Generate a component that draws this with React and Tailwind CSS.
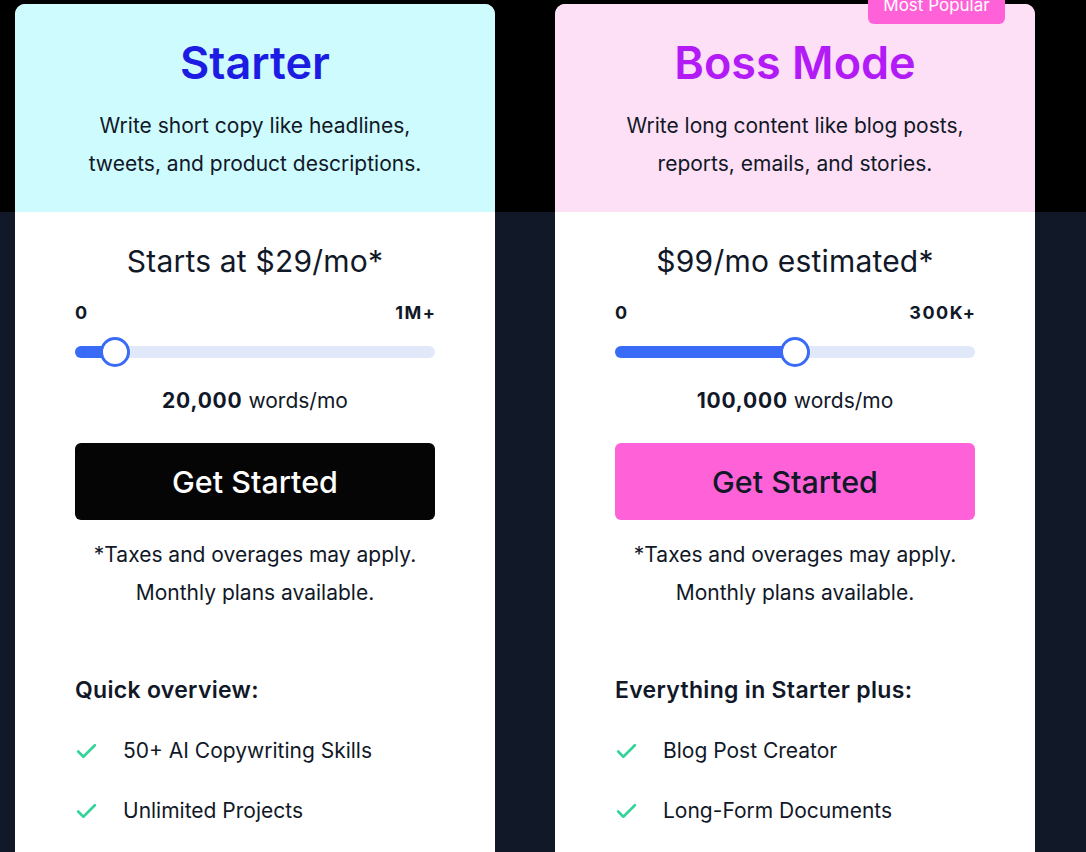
import { Check } from 'lucide-react'

const plans = [
  {
    name: 'Starter',
    headerBg: 'bg-[#cdfbfe]',
    titleColor: 'text-[#1c1ce3]',
    desc: ['Write short copy like headlines,', 'tweets, and product descriptions.'],
    price: 'Starts at $29/mo*',
    max: '1M+',
    fill: 11.1,
    words: '20,000',
    button: 'bg-[#050505] text-white',
    listTitle: 'Quick overview:',
    items: ['50+ AI Copywriting Skills', 'Unlimited Projects'],
  },
  {
    name: 'Boss Mode',
    headerBg: 'bg-[#fde0f6]',
    titleColor: 'text-[#b31bf6]',
    desc: ['Write long content like blog posts,', 'reports, emails, and stories.'],
    price: '$99/mo estimated*',
    max: '300K+',
    fill: 50,
    words: '100,000',
    button: 'bg-[#ff62d8] text-[#111827]',
    listTitle: 'Everything in Starter plus:',
    items: ['Blog Post Creator', 'Long-Form Documents'],
    badge: 'Most Popular',
  },
]

function Slider({ fill }) {
  return (
    <div className="relative mt-[12px] h-[30px] flex items-center">
      <div className="w-full h-3 rounded-full bg-[#e0e8f9]">
        <div className="h-3 rounded-full bg-[#3a6bf7]" style={{ width: `${fill}%` }} />
      </div>
      <div
        className="absolute top-0 w-[30px] h-[30px] -ml-[15px] rounded-full bg-white border-[3px] border-[#3a6bf7]"
        style={{ left: `${fill}%` }}
      />
    </div>
  )
}

function PlanCard({ plan }) {
  return (
    <div className="relative w-[480px] shrink-0 rounded-[10px] bg-white">
      {plan.badge && (
        <div className="absolute -top-[16px] right-[30px] h-[36px] w-[137px] flex items-center justify-center rounded-md bg-[#ff62d8] text-white text-[17px]">
          {plan.badge}
        </div>
      )}
      <div className={`${plan.headerBg} rounded-t-[10px] pt-[35px] pb-[29px] text-center`}>
        <h2 className={`${plan.titleColor} text-[45px] leading-[48px] font-semibold`}>{plan.name}</h2>
        <p className="mt-[20px] text-[21px] leading-[38px] text-[#111827]">
          {plan.desc[0]}
          <br />
          {plan.desc[1]}
        </p>
      </div>
      <div className="px-[60px] pt-[31px] pb-[40px] text-[#111827]">
        <div className="text-center text-[30px] leading-[36px] tracking-[0.2px]">{plan.price}</div>
        <div className="mt-[22px] flex justify-between text-[18px] leading-[24px] font-bold tracking-[1.5px]">
          <span>0</span>
          <span className="-mr-[1.5px]">{plan.max}</span>
        </div>
        <Slider fill={plan.fill} />
        <div className="mt-[20px] text-center text-[21px] leading-[28px]">
          <span className="font-bold tracking-[0.8px]">{plan.words}</span> words/mo
        </div>
        <button className={`${plan.button} mt-[28px] w-full h-[77px] rounded-md text-[30.5px] font-medium`}>
          Get Started
        </button>
        <p className="mt-[16px] text-center text-[21px] leading-[38px]">
          *Taxes and overages may apply.
          <br />
          Monthly plans available.
        </p>
        <h3 className="mt-[63px] text-[23px] leading-[30px] font-semibold tracking-[0.3px]">{plan.listTitle}</h3>
        <ul className="mt-[31px] flex flex-col gap-[30px]">
          {plan.items.map((item) => (
            <li key={item} className="flex items-center text-[21px] leading-[30px]">
              <Check size={25} strokeWidth={2.5} className="text-[#34d399] shrink-0 -ml-[1px]" />
              <span className="ml-[24px]">{item}</span>
            </li>
          ))}
        </ul>
      </div>
    </div>
  )
}

export default function App() {
  return (
    <div
      className="min-h-screen overflow-hidden bg-[linear-gradient(to_bottom,#000_212px,#111827_212px)] pt-[4px] pl-[15px] flex gap-[60px]"
      style={{ fontFamily: 'Inter, "Noto Sans", sans-serif' }}
    >
      {plans.map((p) => (
        <PlanCard key={p.name} plan={p} />
      ))}
    </div>
  )
}
